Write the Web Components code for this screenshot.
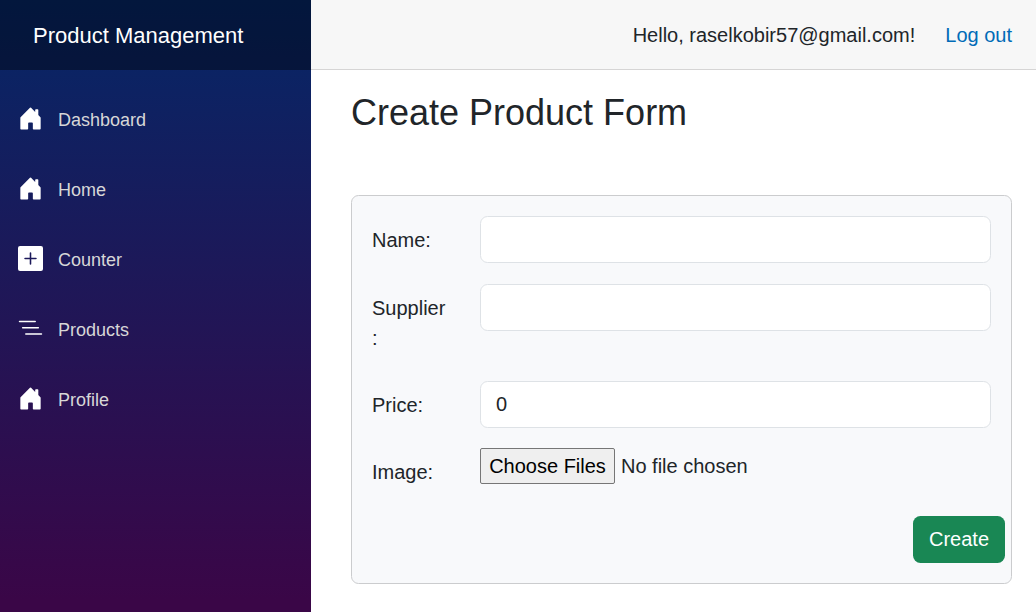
<!DOCTYPE html>
<html lang="en">
<head>
<meta charset="utf-8">
<title>Product Management</title>
<style>
html, body { margin: 0; height: 100%; overflow: hidden; }
body { font: 20px/30px "Liberation Sans", Arial, sans-serif; color: #212529; background: #fff; }
</style>
</head>
<body>
<app-shell>
  <side-bar slot="side" brand="Product Management">
    <nav-item icon="house">Dashboard</nav-item>
    <nav-item icon="house">Home</nav-item>
    <nav-item icon="plus">Counter</nav-item>
    <nav-item icon="list">Products</nav-item>
    <nav-item icon="house">Profile</nav-item>
  </side-bar>
  <top-bar slot="top" user="raselkobir57@gmail.com"></top-bar>
  <product-form heading="Create Product Form">
    <form-row label="Name:"><text-field></text-field></form-row>
    <form-row label="Supplier:" class="tall"><text-field></text-field></form-row>
    <form-row label="Price:"><text-field value="0"></text-field></form-row>
    <form-row label="Image:"><file-field></file-field></form-row>
    <action-button slot="action">Create</action-button>
  </product-form>
</app-shell>
<script>
const ICONS = {
  house: 'M6.5 14.5v-3.505c0-.245.25-.495.5-.495h2c.25 0 .5.25.5.5v3.5a.5.5 0 0 0 .5.5h4a.5.5 0 0 0 .5-.5v-7a.5.5 0 0 0-.146-.354L13 5.793V2.5a.5.5 0 0 0-.5-.5h-1a.5.5 0 0 0-.5.5v1.293L8.354 1.146a.5.5 0 0 0-.708 0l-6 6A.5.5 0 0 0 1.5 7.5v7a.5.5 0 0 0 .5.5h4a.5.5 0 0 0 .5-.5Z',
  plus: 'M1.300 0A1.300 1.300 0 0 0 0 1.300v13.400A1.300 1.300 0 0 0 1.300 16h13.400a1.300 1.300 0 0 0 1.300-1.300V1.300A1.300 1.300 0 0 0 14.700 0H1.300zm7.200 4.500v3h3a.5.5 0 0 1 0 1h-3v3a.5.5 0 0 1-1 0v-3h-3a.5.5 0 0 1 0-1h3v-3a.5.5 0 0 1 1 0z',
  list: 'M4.500 11.500A.5.5 0 0 1 5 11h10a.5.5 0 0 1 0 1H5a.5.5 0 0 1-.5-.5zm-2-4A.5.5 0 0 1 3 7h10a.5.5 0 0 1 0 1H3a.5.5 0 0 1-.5-.5zm-2-4A.5.5 0 0 1 1 3h10a.5.5 0 0 1 0 1H1a.5.5 0 0 1-.5-.5z'
};
const define = (name, html) => customElements.define(name, class extends HTMLElement {
  constructor() {
    super();
    this.attachShadow({ mode: 'open' }).innerHTML = html(this);
  }
});

define('app-shell', () => `
  <style>
    :host { display: grid; grid-template-columns: 311px 1fr; height: 100vh; }
    .main { display: flex; flex-direction: column; min-width: 0; }
  </style>
  <slot name="side"></slot>
  <div class="main"><slot name="top"></slot><slot></slot></div>`);

define('side-bar', el => `
  <style>
    :host { display: flex; flex-direction: column; background: linear-gradient(180deg, rgb(5,39,103) 0, #3a0647 600px); }
    header { height: 70px; box-sizing: border-box; padding: 0 33px; display: flex; align-items: center;
      background: rgba(0,0,0,.4); color: #fff; font-size: 22px; line-height: 33px; white-space: nowrap; }
    nav { display: flex; flex-direction: column; gap: 20px; padding-top: 25px; }
  </style>
  <header>${el.getAttribute('brand')}</header>
  <nav><slot></slot></nav>`);

define('nav-item', el => `
  <style>
    :host { display: flex; align-items: center; gap: 15px; height: 50px; padding-left: 18px; color: #d7d7d7; font-size: 18px; }
    svg { width: 25px; height: 25px; fill: #fff; display: block; margin-bottom: 3px; }
  </style>
  <svg viewBox="0 0 16 16"><path d="${ICONS[el.getAttribute('icon')]}"/></svg><span><slot></slot></span>`);

define('top-bar', el => `
  <style>
    :host { display: flex; align-items: center; justify-content: flex-end; gap: 30px; height: 70px; box-sizing: border-box;
      padding-right: 24px; background: #f7f7f7; border-bottom: 1px solid #d6d5d5; }
    a { color: #006bb7; text-decoration: none; }
  </style>
  <span>Hello, ${el.getAttribute('user')}!</span><a href="#">Log out</a>`);

define('product-form', el => `
  <style>
    :host { display: block; padding: 21px 24px 0 40px; }
    h2 { margin: 0 0 61px; font-weight: 400; font-size: 36px; line-height: 43px; white-space: nowrap; }
    .card { box-sizing: border-box; height: 389px; padding: 20px; border: 1px solid #cbccce; border-radius: 7.5px; background: #f8f9fb;
      display: flex; flex-direction: column; gap: 21px; }
    .action { display: flex; justify-content: flex-end; margin-right: -14px; }
  </style>
  <h2>${el.getAttribute('heading')}</h2>
  <div class="card"><slot></slot><div class="action"><slot name="action"></slot></div></div>`);

define('form-row', el => `
  <style>
    :host { display: grid; grid-template-columns: 78px 511px; column-gap: 30px; align-items: start; height: 46.5px; flex: none; }
    :host(.tall) { height: 76px; }
    label { padding-top: 9px; line-height: 30px; overflow-wrap: anywhere; }
  </style>
  <label>${el.getAttribute('label')}</label><slot></slot>`);

define('text-field', el => `
  <style>
    :host { display: block; height: 47px; }
    input { display: block; box-sizing: border-box; width: 100%; height: 47px; margin: 0; padding: 7px 15px; border: 1px solid #dee2e6;
      border-radius: 7.5px; background: #fff; color: #212529; font: inherit; }
  </style>
  <input type="text" value="${el.getAttribute('value') || ''}">`);

define('file-field', () => `
  <style>
    :host { display: flex; align-items: center; gap: 6px; height: 36px; }
    button { box-sizing: border-box; width: 135px; height: 36px; margin: 0; padding: 0; border: 1px solid #767676; border-radius: 2px;
      background: #efefef; color: #000; font: inherit; white-space: nowrap; }
  </style>
  <button type="button">Choose Files</button><span>No file chosen</span>`);

define('action-button', () => `
  <style>
    :host { display: block; }
    button { box-sizing: border-box; width: 92px; height: 47px; margin: 0; padding: 0; border: 0; border-radius: 7.5px;
      background: #198754; color: #fff; font: inherit; }
  </style>
  <button type="button"><slot></slot></button>`);
</script>
</body>
</html>
